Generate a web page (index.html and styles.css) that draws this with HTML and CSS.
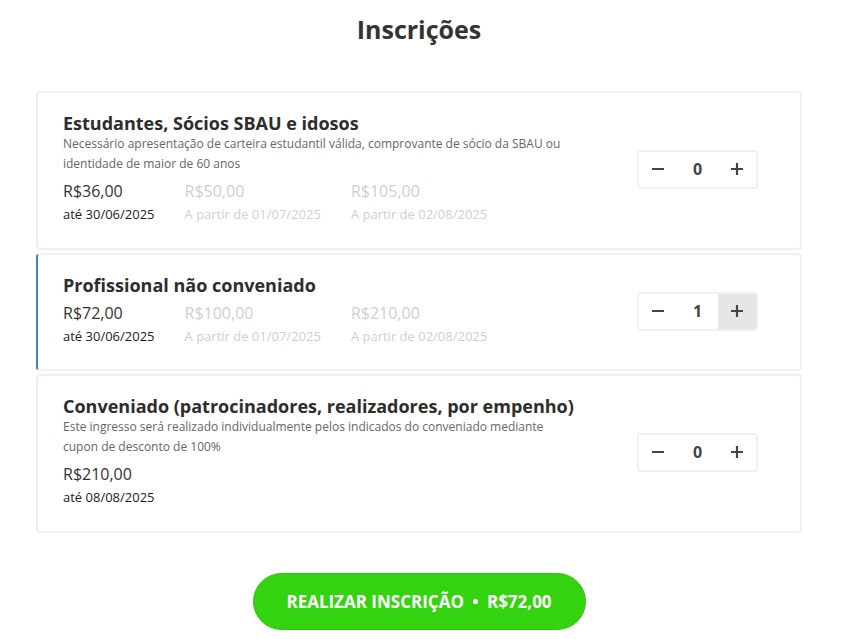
FILE: index.html
```html
<!DOCTYPE html>
<html lang="pt-BR">
  <head>
    <meta charset="UTF-8" />
    <meta name="viewport" content="width=device-width, initial-scale=1.0" />
    <title>Inscrições</title>
    <link rel="stylesheet" href="styles.css">
  </head>
  <body>
    <div class="tickets">
      <h1 class="tickets-title">Inscrições</h1>

      <div class="ticket-list">
        <div class="ticket">
          <div class="ticket-info">
            <h2 class="ticket-name">Estudantes, Sócios SBAU e idosos</h2>
            <p class="ticket-desc">Necessário apresentação de carteira estudantil válida, comprovante de sócio da SBAU ou identidade de maior de 60 anos</p>
            <div class="lots">
              <div class="lot">
                <span class="lot-price">R$36,00</span>
                <span class="lot-date">até 30/06/2025</span>
              </div>
              <div class="lot lot-off">
                <span class="lot-price">R$50,00</span>
                <span class="lot-date">A partir de 01/07/2025</span>
              </div>
              <div class="lot lot-off">
                <span class="lot-price">R$105,00</span>
                <span class="lot-date">A partir de 02/08/2025</span>
              </div>
            </div>
          </div>
          <div class="stepper">
            <button class="step-btn" aria-label="Remover">
              <svg width="14" height="14" viewBox="0 0 14 14"><path d="M1 7h12" stroke="#444" stroke-width="2.2"/></svg>
            </button>
            <span class="step-value">0</span>
            <button class="step-btn" aria-label="Adicionar">
              <svg width="14" height="14" viewBox="0 0 14 14"><path d="M1 7h12M7 1v12" stroke="#444" stroke-width="2.2"/></svg>
            </button>
          </div>
        </div>

        <div class="ticket ticket-selected">
          <div class="ticket-info">
            <h2 class="ticket-name">Profissional não conveniado</h2>
            <div class="lots">
              <div class="lot">
                <span class="lot-price">R$72,00</span>
                <span class="lot-date">até 30/06/2025</span>
              </div>
              <div class="lot lot-off">
                <span class="lot-price">R$100,00</span>
                <span class="lot-date">A partir de 01/07/2025</span>
              </div>
              <div class="lot lot-off">
                <span class="lot-price">R$210,00</span>
                <span class="lot-date">A partir de 02/08/2025</span>
              </div>
            </div>
          </div>
          <div class="stepper">
            <button class="step-btn" aria-label="Remover">
              <svg width="14" height="14" viewBox="0 0 14 14"><path d="M1 7h12" stroke="#444" stroke-width="2.2"/></svg>
            </button>
            <span class="step-value">1</span>
            <button class="step-btn step-btn-hover" aria-label="Adicionar">
              <svg width="14" height="14" viewBox="0 0 14 14"><path d="M1 7h12M7 1v12" stroke="#444" stroke-width="2.2"/></svg>
            </button>
          </div>
        </div>

        <div class="ticket">
          <div class="ticket-info">
            <h2 class="ticket-name">Conveniado (patrocinadores, realizadores, por empenho)</h2>
            <p class="ticket-desc">Este ingresso será realizado individualmente pelos indicados do conveniado mediante cupon de desconto de 100%</p>
            <div class="lots">
              <div class="lot">
                <span class="lot-price">R$210,00</span>
                <span class="lot-date">até 08/08/2025</span>
              </div>
            </div>
          </div>
          <div class="stepper">
            <button class="step-btn" aria-label="Remover">
              <svg width="14" height="14" viewBox="0 0 14 14"><path d="M1 7h12" stroke="#444" stroke-width="2.2"/></svg>
            </button>
            <span class="step-value">0</span>
            <button class="step-btn" aria-label="Adicionar">
              <svg width="14" height="14" viewBox="0 0 14 14"><path d="M1 7h12M7 1v12" stroke="#444" stroke-width="2.2"/></svg>
            </button>
          </div>
        </div>
      </div>

      <div class="checkout">
        <button class="checkout-btn">REALIZAR INSCRIÇÃO <span class="dot"></span> R$72,00</button>
      </div>
    </div>
  </body>
</html>
```

FILE: styles.css
```css
body {
  font-family: "Open Sans", Arial, sans-serif;
  background-color: #fff;
  color: #333;
  margin: 0;
}

.tickets {
  width: 766px;
  margin-left: 36px;
}

.tickets-title {
  text-align: center;
  font-size: 25px;
  font-weight: 700;
  line-height: 32px;
  margin: 13px 0 0;
  color: #333;
}

.ticket-list {
  margin-top: 46px;
  display: flex;
  flex-direction: column;
  gap: 3px;
}

.ticket {
  display: flex;
  align-items: center;
  justify-content: space-between;
  border: 2px solid #efefef;
  border-radius: 4px;
  padding: 19px 42px 24px 25px;
}

.ticket-selected {
  border-left-color: #3d85c6;
  padding-bottom: 23px;
}

.ticket-name {
  font-size: 18px;
  font-weight: 700;
  line-height: 22px;
  margin: 0;
  color: #2d2d2d;
}

.ticket-desc {
  font-size: 12px;
  line-height: 20px;
  color: #666;
  margin: 0;
  max-width: 500px;
}

.lots {
  display: flex;
  margin-top: 6px;
}

.lot {
  display: flex;
  flex-direction: column;
  margin-right: 30px;
}

.lot-price {
  font-size: 16px;
  line-height: 22px;
  color: #333;
}

.lot-date {
  font-size: 13px;
  line-height: 20px;
  margin-top: 2px;
  color: #222;
}

.lot-off .lot-price,
.lot-off .lot-date {
  color: #cdcfd6;
}

.stepper {
  display: flex;
  align-items: center;
  border: 2px solid #f0f0f0;
  border-radius: 4px;
  height: 39px;
  box-sizing: border-box;
  overflow: hidden;
  margin-top: 2px;
}

.step-btn {
  width: 38px;
  height: 35px;
  border: none;
  background: #fff;
  padding: 0;
  display: flex;
  align-items: center;
  justify-content: center;
  cursor: pointer;
}

.step-btn-hover {
  background-color: #e6e6e6;
}

.step-value {
  width: 41px;
  text-align: center;
  font-size: 16px;
  font-weight: 700;
  color: #444;
}

.checkout {
  display: flex;
  justify-content: center;
  margin-top: 40px;
}

.checkout-btn {
  width: 333px;
  height: 57px;
  border-radius: 29px;
  border: 1px solid #2fc40c;
  background-color: #33d40f;
  color: #fff;
  font-family: "Open Sans", Arial, sans-serif;
  font-size: 17px;
  font-weight: 700;
  cursor: pointer;
  display: flex;
  align-items: center;
  justify-content: center;
  gap: 9px;
}

.dot {
  width: 5px;
  height: 5px;
  border-radius: 50%;
  background-color: #fff;
}
```
